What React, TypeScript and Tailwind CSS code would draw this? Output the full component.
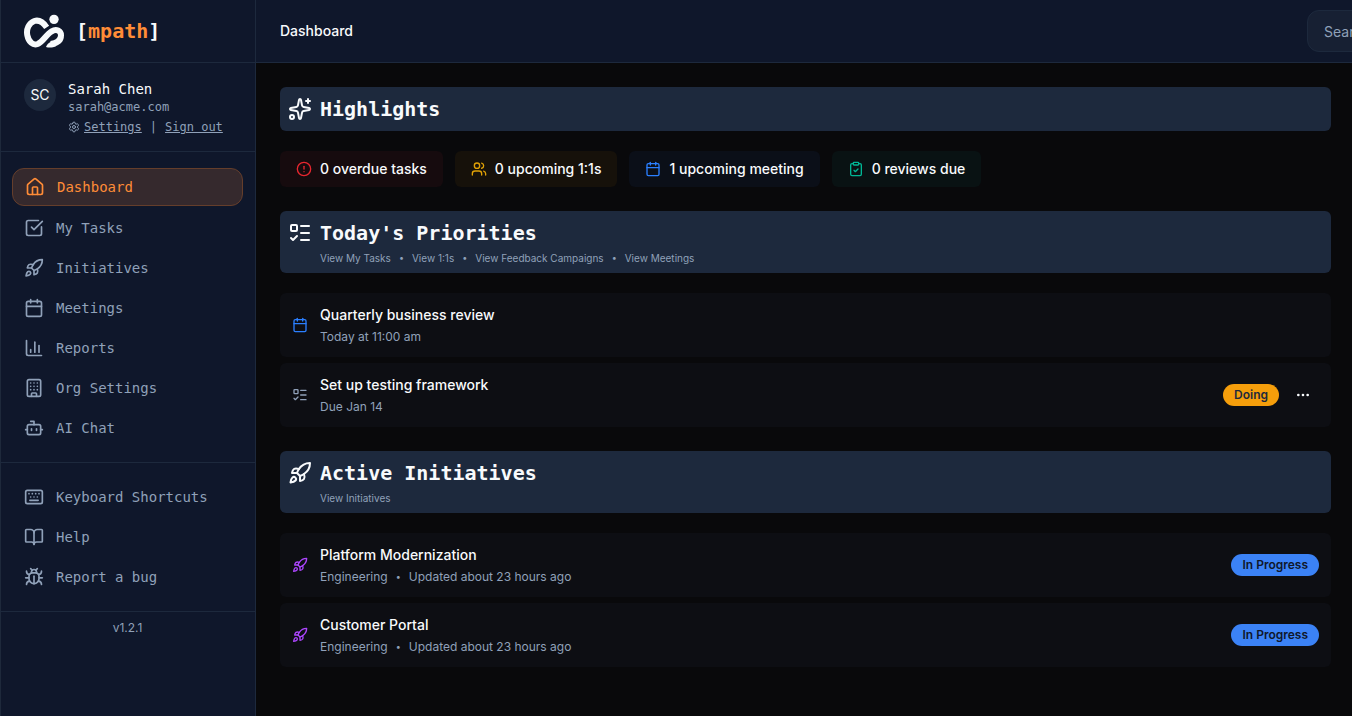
import type { ComponentType, ReactNode } from "react";
import {
  BookOpen,
  Bot,
  Bug,
  Building,
  Calendar,
  ChartColumn,
  CircleAlert,
  ClipboardCheck,
  Ellipsis,
  House,
  Keyboard,
  ListTodo,
  Rocket,
  Settings,
  Sparkles,
  SquareCheckBig,
  Users,
} from "lucide-react";

type Icon = ComponentType<{ className?: string }>;

const MAIN_NAV: { label: string; icon: Icon; active?: boolean }[] = [
  { label: "Dashboard", icon: House, active: true },
  { label: "My Tasks", icon: SquareCheckBig },
  { label: "Initiatives", icon: Rocket },
  { label: "Meetings", icon: Calendar },
  { label: "Reports", icon: ChartColumn },
  { label: "Org Settings", icon: Building },
  { label: "AI Chat", icon: Bot },
];

const HELP_NAV: { label: string; icon: Icon; active?: boolean }[] = [
  { label: "Keyboard Shortcuts", icon: Keyboard },
  { label: "Help", icon: BookOpen },
  { label: "Report a bug", icon: Bug },
];

const STATS: { label: string; icon: Icon; bg: string; color: string }[] = [
  { label: "0 overdue tasks", icon: CircleAlert, bg: "bg-[#160b0e]", color: "text-[#e7262f]" },
  { label: "0 upcoming 1:1s", icon: Users, bg: "bg-[#16110a]", color: "text-[#e0a106]" },
  { label: "1 upcoming meeting", icon: Calendar, bg: "bg-[#0b0f18]", color: "text-[#2b7fff]" },
  { label: "0 reviews due", icon: ClipboardCheck, bg: "bg-[#091213]", color: "text-[#00b795]" },
];

function Logo() {
  return (
    <svg viewBox="0 0 120 102" className="h-[34px] w-10 text-slate-50" aria-hidden="true">
      <path
        d="M68 40C57 24 44 17 31 21C15 27 6 45 10 64C14 84 27 95 41 90C57 83 66 62 83 52C97 44 111 50 111 64C111 80 98 88 80 90"
        fill="none"
        stroke="currentColor"
        strokeWidth="18"
      />
      <path d="M66 99C70 88 77 83 92 80L96 97C87 101 75 102 66 99Z" fill="currentColor" />
      <circle cx="90" cy="16" r="14" fill="currentColor" />
    </svg>
  );
}

function NavList({ items, label }: { items: typeof MAIN_NAV; label: string }) {
  return (
    <nav aria-label={label} className="flex flex-col gap-1 border-b border-slate-800 px-3 py-4">
      {items.map(({ label, icon: ItemIcon, active }) => (
        <a
          key={label}
          href="#"
          className={
            active
              ? "flex items-center gap-3 rounded-xl border border-[#653e2b] bg-[#35292d] px-3 py-2 text-sm text-[#ff8c37]"
              : "flex items-center gap-3 rounded-xl px-3 py-2 text-sm text-slate-400"
          }
        >
          <ItemIcon className="size-5" />
          {label}
        </a>
      ))}
    </nav>
  );
}

function Sidebar() {
  return (
    <aside className="w-64 shrink-0 border-r border-slate-800 bg-slate-900 font-['DejaVu_Sans_Mono',monospace] shadow-[inset_1px_0_0_#1e293b]">
      <div className="flex h-[63px] items-center gap-3 border-b border-slate-800 px-6">
        <Logo />
        <span className="text-xl font-bold text-slate-50">
          [<span className="text-[#ff8c37]">mpath</span>]
        </span>
      </div>
      <div className="flex gap-3 border-b border-slate-800 px-6 py-4">
        <div className="flex size-8 shrink-0 items-center justify-center rounded-full bg-slate-800 font-[Inter,sans-serif] text-sm text-slate-50">
          SC
        </div>
        <div>
          <p className="text-sm font-medium text-slate-50">Sarah Chen</p>
          <p className="text-xs text-slate-400">sarah@acme.com</p>
          <div className="mt-1 flex items-center gap-2 text-xs text-slate-400">
            <a href="#" className="flex items-center gap-1 underline">
              <Settings className="size-3" />
              Settings
            </a>
            <span>|</span>
            <a href="#" className="underline">
              Sign out
            </a>
          </div>
        </div>
      </div>
      <NavList items={MAIN_NAV} label="Main" />
      <NavList items={HELP_NAV} label="Support" />
      <p className="py-2 text-center font-[Inter,sans-serif] text-xs text-slate-400">v1.2.1</p>
    </aside>
  );
}

function SectionHeader({ icon: HeaderIcon, title, links }: { icon: Icon; title: string; links?: string[] }) {
  return (
    <div className="flex gap-2 rounded-md bg-slate-800 p-2">
      <HeaderIcon className="mt-[2px] size-6 shrink-0 text-slate-50" />
      <div>
        <h2 className="font-['DejaVu_Sans_Mono',monospace] text-xl leading-7 font-bold text-slate-50">{title}</h2>
        {links && (
          <div className="mt-1 flex gap-2 text-[10px] leading-[14px] text-slate-400">
            {links.map((link, i) => (
              <span key={link} className="flex gap-2">
                {i > 0 && <span className="text-[9px]">•</span>}
                <a href="#">{link}</a>
              </span>
            ))}
          </div>
        )}
      </div>
    </div>
  );
}

function Row({
  icon: RowIcon,
  color,
  title,
  meta,
  children,
}: {
  icon: Icon;
  color: string;
  title: string;
  meta: string[];
  children?: ReactNode;
}) {
  return (
    <li className="flex items-center gap-3 rounded-md bg-[#0d0e13] p-3">
      <RowIcon className={`size-4 shrink-0 ${color}`} />
      <div className="min-w-0 flex-1">
        <p className="text-sm font-[450] text-slate-50">{title}</p>
        <p className="mt-1 flex gap-2 text-xs text-slate-400">
          {meta.map((m, i) => (
            <span key={m} className="flex gap-2">
              {i > 0 && <span className="text-[9px] leading-4">•</span>}
              {m}
            </span>
          ))}
        </p>
      </div>
      {children && <div className="flex items-center gap-2">{children}</div>}
    </li>
  );
}

function Badge({ className, children }: { className: string; children: ReactNode }) {
  return (
    <span className={`rounded-full border border-transparent px-2.5 py-0.5 text-xs font-semibold ${className}`}>
      {children}
    </span>
  );
}

export default function App() {
  return (
    <div className="flex min-h-screen bg-[#09090b] font-[Inter,sans-serif] text-slate-50">
      <Sidebar />
      <div className="min-w-0 flex-1 overflow-hidden">
        <header className="flex h-[63px] items-center justify-between border-b border-slate-800 bg-slate-900 pl-6">
          <h1 className="text-sm font-[450]">Dashboard</h1>
          <input
            type="search"
            aria-label="Search"
            placeholder="Search..."
            className="-mr-[211px] h-[42px] w-64 shrink-0 rounded-xl border border-slate-800 bg-[#172033] px-4 text-sm placeholder:text-slate-400"
          />
        </header>

        <main className="flex flex-col gap-6 py-6 pr-[21px] pl-6">
          <section className="flex flex-col gap-5">
            <SectionHeader icon={Sparkles} title="Highlights" />
            <ul className="flex flex-wrap gap-3">
              {STATS.map(({ label, icon: StatIcon, bg, color }) => (
                <li key={label} className={`flex items-center gap-2 rounded-md px-4 py-2 text-sm font-[450] ${bg}`}>
                  <StatIcon className={`size-4 ${color}`} />
                  {label}
                </li>
              ))}
            </ul>
          </section>

          <section className="flex flex-col gap-5">
            <SectionHeader
              icon={ListTodo}
              title="Today's Priorities"
              links={["View My Tasks", "View 1:1s", "View Feedback Campaigns", "View Meetings"]}
            />
            <ul className="flex flex-col gap-1.5">
              <Row icon={Calendar} color="text-[#2b7fff]" title="Quarterly business review" meta={["Today at 11:00 am"]} />
              <Row icon={ListTodo} color="text-slate-400" title="Set up testing framework" meta={["Due Jan 14"]}>
                <Badge className="bg-[#f59e0b] text-slate-800">Doing</Badge>
                <button type="button" aria-label="More actions" className="flex size-8 items-center justify-center">
                  <Ellipsis className="size-4" />
                </button>
              </Row>
            </ul>
          </section>

          <section className="flex flex-col gap-5">
            <SectionHeader icon={Rocket} title="Active Initiatives" links={["View Initiatives"]} />
            <ul className="flex flex-col gap-1.5">
              {["Platform Modernization", "Customer Portal"].map((title) => (
                <Row
                  key={title}
                  icon={Rocket}
                  color="text-[#ad46ff]"
                  title={title}
                  meta={["Engineering", "Updated about 23 hours ago"]}
                >
                  <Badge className="bg-[#3b82f6] text-slate-900">In Progress</Badge>
                </Row>
              ))}
            </ul>
          </section>
        </main>
      </div>
    </div>
  );
}
